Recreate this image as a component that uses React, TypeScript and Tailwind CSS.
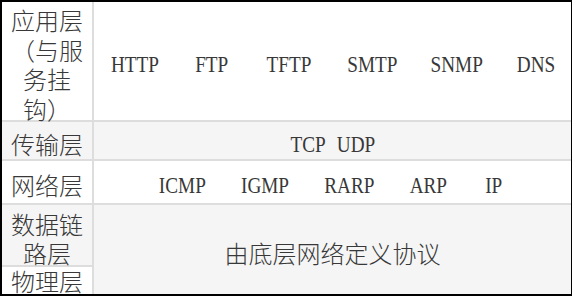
const appLayer = [
  { label: "HTTP", w: "w-[47px]" },
  { label: "FTP", w: "w-[34px]" },
  { label: "TFTP", w: "w-[46px]" },
  { label: "SMTP", w: "w-[47px]" },
  { label: "SNMP", w: "w-[47px]" },
  { label: "DNS", w: "w-[37px]" },
];

const netLayer = [
  { label: "ICMP", w: "w-[44px]" },
  { label: "IGMP", w: "w-[45px]" },
  { label: "RARP", w: "w-[47px]" },
  { label: "ARP", w: "w-[35px]" },
  { label: "IP", w: "w-[21px]" },
];

function Proto({ label, w }: { label: string; w: string }) {
  return (
    <span className={`flex ${w} justify-center`}>
      <span className="whitespace-nowrap scale-x-[0.8] [font-family:'Liberation_Serif',serif]">
        {label}
      </span>
    </span>
  );
}

export default function App() {
  return (
    <div className="h-[297px] w-[573px] bg-white">
      <div className="grid w-[572px] grid-cols-[90px_477px] grid-rows-[118px_37px_42px_60px_27px] gap-[2px] border-t-2 border-r border-b-2 border-l-2 border-black bg-[#dddddd] [font-family:'Noto_Sans_CJK_SC',sans-serif] text-[24px] leading-[29.5px] font-light text-[#383838]">
        {/* application layer */}
        <div className="flex items-center justify-center bg-white pt-[6px] text-center">
          <span>
            应用层
            <br />
            （与服
            <br />
            务挂
            <br />
            钩）
          </span>
        </div>
        <div className="flex items-center justify-center gap-[37px] bg-white pt-[7px]">
          {appLayer.map((p) => (
            <Proto key={p.label} {...p} />
          ))}
        </div>

        {/* transport layer */}
        <div className="flex items-center justify-center bg-[#f5f5f5] pt-[6px]">传输层</div>
        <div className="flex items-center justify-center gap-[14px] bg-[#f5f5f5] pt-[8px]">
          <Proto label="TCP" w="w-[32px]" />
          <Proto label="UDP" w="w-[35px]" />
        </div>

        {/* network layer */}
        <div className="flex items-center justify-center bg-white pt-[6px]">网络层</div>
        <div className="flex items-center justify-center gap-[38px] bg-white pt-[7px]">
          {netLayer.map((p) => (
            <Proto key={p.label} {...p} />
          ))}
        </div>

        {/* data link + physical */}
        <div className="flex items-center justify-center bg-[#f5f5f5] pt-[6px] text-center">
          <span>
            数据链
            <br />
            路层
          </span>
        </div>
        <div className="row-span-2 flex items-center justify-center bg-[#f5f5f5] pt-[6px]">
          由底层网络定义协议
        </div>
        <div className="flex items-center justify-center bg-white">物理层</div>
      </div>
    </div>
  );
}
